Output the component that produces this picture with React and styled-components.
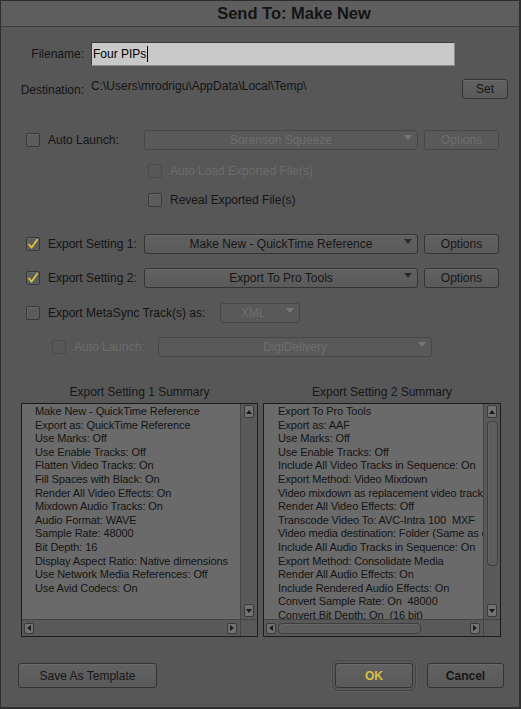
import React from 'react'
import styled, { createGlobalStyle, css } from 'styled-components'

const GlobalStyle = createGlobalStyle`
  html, body {
    margin: 0;
    padding: 0;
    background: #575757;
  }
  body {
    font-family: "Liberation Sans", Arial, sans-serif;
    font-size: 12px;
    color: #111;
  }
`

const Window = styled.div`
  width: 521px;
  height: 709px;
  box-sizing: border-box;
  background: #575757;
  border: 1px solid #2f2f2f;
  border-right-width: 2px;
  border-bottom-width: 2px;
  display: flex;
  flex-direction: column;
  overflow: hidden;
`

const TitleBar = styled.div`
  height: 25px;
  flex-shrink: 0;
  background: #5e5e5e;
  border-bottom: 1px solid #3d3d3d;
  display: flex;
  align-items: center;
  justify-content: center;
  padding-left: 68px;
  font-size: 16.5px;
  font-weight: bold;
  color: #141414;
`

const Body = styled.div`
  display: flex;
  flex-direction: column;
`

const Row = styled.div`
  display: flex;
  align-items: center;
  height: ${p => p.$height || 20}px;
  margin-top: ${p => p.$top}px;
  padding-left: ${p => p.$indent || 0}px;
`

const FieldLabel = styled.div`
  width: 83px;
  text-align: right;
  margin-right: 7px;
  color: #141414;
  padding-top: ${p => p.$drop || 0}px;
`

const TextInput = styled.div`
  width: 364px;
  height: 24px;
  box-sizing: border-box;
  background: #c9c9c9;
  border: 1px solid #3a3a3a;
  border-right-color: #8a8a8a;
  border-bottom-color: #8a8a8a;
  display: flex;
  align-items: center;
  padding-left: 1px;
  color: #000;
`

const Caret = styled.span`
  display: inline-block;
  width: 1px;
  height: 16px;
  background: #000;
  margin-left: 1px;
`

const PathText = styled.div`
  flex: 1;
  margin-top: -7px;
  color: #141414;
`

const buttonBase = css`
  box-sizing: border-box;
  height: ${p => p.$h || 20}px;
  width: ${p => p.$w}px;
  border: 1px solid #343434;
  border-radius: 3px;
  background: linear-gradient(#616161, #5a5a5a);
  box-shadow: inset 0 1px 0 #6a6a6a;
  display: flex;
  align-items: center;
  justify-content: center;
  font-family: "Liberation Sans", Arial, sans-serif;
  font-size: 12px;
  flex-shrink: 0;
`

const Button = styled.div`
  ${buttonBase}
  color: ${p => (p.$disabled ? '#6e6e6e' : '#161616')};
  margin-left: ${p => p.$ml || 0}px;
  margin-right: ${p => p.$mr || 0}px;
  font-weight: ${p => (p.$bold ? 'bold' : 'normal')};
  ${p => p.$disabled && css`
    border-color: #474747;
    box-shadow: none;
    background: #595959;
  `}
`

const DefaultButton = styled(Button)`
  color: #d6c148;
  box-shadow: inset 0 1px 0 #6a6a6a, 0 0 0 2px #595959, 0 0 0 3px #444, 0 0 0 4px #606060;
`

const Check = styled.div`
  width: 14px;
  height: 14px;
  box-sizing: border-box;
  border: 1px solid ${p => (p.$disabled ? '#4b4b4b' : '#383838')};
  border-radius: 2px;
  background: ${p => (p.$disabled ? '#575757' : '#5c5c5c')};
  box-shadow: ${p => (p.$disabled ? 'none' : 'inset 1px 1px 0 #666')};
  flex-shrink: 0;
  display: flex;
  align-items: center;
  justify-content: center;
`

const Label = styled.div`
  margin-left: 8px;
  width: ${p => (p.$w ? `${p.$w}px` : 'auto')};
  color: ${p => (p.$disabled ? '#6c6c6c' : '#141414')};
  white-space: nowrap;
  flex-shrink: 0;
`

const Select = styled.div`
  ${buttonBase}
  position: relative;
  color: ${p => (p.$disabled ? '#6e6e6e' : '#161616')};
  padding-right: ${p => (p.$small ? 14 : 0)}px;
  ${p => p.$disabled && css`
    border-color: #474747;
    box-shadow: none;
    background: #595959;
  `}
`

const Arrow = styled.span`
  position: absolute;
  right: 5px;
  top: 4px;
  width: 0;
  height: 0;
  border-left: 4px solid transparent;
  border-right: 4px solid transparent;
  border-top: 5px solid ${p => (p.$disabled ? '#777' : '#2a2a2a')};
`

const SummaryGrid = styled.div`
  display: grid;
  grid-template-columns: 237px 238px;
  column-gap: 5px;
  padding-left: 20px;
  margin-top: 27px;
`

const SummaryTitle = styled.div`
  text-align: center;
  height: 19px;
  line-height: 17px;
  color: #161616;
`

const Panel = styled.div`
  height: 234px;
  box-sizing: border-box;
  border: 1px solid #1c1c1c;
  display: grid;
  grid-template-columns: 1fr 17px;
  grid-template-rows: 1fr 17px;
`

const List = styled.div`
  background: #6a6a6a;
  overflow: hidden;
  padding: 1px 0 0 ${p => p.$pad}px;
  font-size: 11px;
  line-height: 13.6px;
  letter-spacing: -0.1px;
  color: #141414;
  white-space: pre;
`

const VTrack = styled.div`
  background: #595959;
  border-left: 1px solid #444;
  display: flex;
  flex-direction: column;
  align-items: center;
  padding: 1px 0 2px;
`

const HTrack = styled.div`
  background: #595959;
  border-top: 1px solid #444;
  display: flex;
  align-items: center;
  padding: 0 3px 0 2px;
`

const Corner = styled.div`
  background: #595959;
  border-top: 1px solid #444;
  border-left: 1px solid #444;
`

const ArrowButton = styled.div`
  width: 10px;
  height: ${p => (p.$horiz ? 11 : 13)}px;
  box-sizing: border-box;
  border: 1px solid #3a3a3a;
  border-radius: 2px;
  background: #727272;
  display: flex;
  align-items: center;
  justify-content: center;
  flex-shrink: 0;
`

const TriUp = styled.span`
  width: 0;
  height: 0;
  border-left: 3px solid transparent;
  border-right: 3px solid transparent;
  border-${p => (p.$dir === 'up' ? 'bottom' : 'top')}: 4px solid #1c1c1c;
`

const TriSide = styled.span`
  width: 0;
  height: 0;
  border-top: 3px solid transparent;
  border-bottom: 3px solid transparent;
  border-${p => (p.$dir === 'left' ? 'right' : 'left')}: 4px solid #1c1c1c;
`

const VThumb = styled.div`
  width: 11px;
  margin-top: 3px;
  height: 145px;
  box-sizing: border-box;
  border: 1px solid #3e3e3e;
  border-radius: 4px;
  background: #5d5d5d;
  box-shadow: inset 1px 1px 0 #666;
`

const HThumb = styled.div`
  height: 11px;
  width: 143px;
  margin-left: 2px;
  box-sizing: border-box;
  border: 1px solid #3e3e3e;
  border-radius: 4px;
  background: #5d5d5d;
  box-shadow: inset 1px 1px 0 #666;
`

const Spacer = styled.div`
  flex: 1;
`

const Footer = styled.div`
  display: flex;
  align-items: center;
  margin-top: 26px;
  padding: 0 15px 0 17px;
`

const CheckMark = () => (
  <svg width="12" height="12" viewBox="0 0 12 12">
    <path d="M2 6.5 L4.6 9.6 L10.2 1.8" fill="none" stroke="#dcc640" strokeWidth="1.8" strokeLinecap="round" strokeLinejoin="round" />
  </svg>
)

const Checkbox = ({ checked, disabled }) => (
  <Check $disabled={disabled}>{checked && <CheckMark />}</Check>
)

const Dropdown = ({ value, width, disabled, small }) => (
  <Select $w={width} $disabled={disabled} $small={small}>
    {value}
    <Arrow $disabled={disabled} />
  </Select>
)

const SummaryPanel = ({ lines, pad, thumb }) => (
  <Panel>
    <List $pad={pad}>
      {lines.map((line, i) => (
        <div key={i}>{line}</div>
      ))}
    </List>
    <VTrack>
      <ArrowButton><TriUp $dir="up" /></ArrowButton>
      {thumb && <VThumb />}
      <Spacer />
      <ArrowButton><TriUp $dir="down" /></ArrowButton>
    </VTrack>
    <HTrack>
      <ArrowButton $horiz><TriSide $dir="left" /></ArrowButton>
      {thumb && <HThumb />}
      <Spacer />
      <ArrowButton $horiz><TriSide $dir="right" /></ArrowButton>
    </HTrack>
    <Corner />
  </Panel>
)

const summary1 = [
  'Make New - QuickTime Reference',
  'Export as: QuickTime Reference',
  'Use Marks: Off',
  'Use Enable Tracks: Off',
  'Flatten Video Tracks: On',
  'Fill Spaces with Black: On',
  'Render All Video Effects: On',
  'Mixdown Audio Tracks: On',
  'Audio Format: WAVE',
  'Sample Rate: 48000',
  'Bit Depth: 16',
  'Display Aspect Ratio: Native dimensions',
  'Use Network Media References: Off',
  'Use Avid Codecs: On',
]

const summary2 = [
  'Export To Pro Tools',
  'Export as: AAF',
  'Use Marks: Off',
  'Use Enable Tracks: Off',
  'Include All Video Tracks in Sequence: On',
  'Export Method: Video Mixdown',
  'Video mixdown as replacement video track',
  'Render All Video Effects: Off',
  'Transcode Video To: AVC-Intra 100  MXF',
  'Video media destination: Folder (Same as export)',
  'Include All Audio Tracks in Sequence: On',
  'Export Method: Consolidate Media',
  'Render All Audio Effects: On',
  'Include Rendered Audio Effects: On',
  'Convert Sample Rate: On  48000',
  'Convert Bit Depth: On  (16 bit)',
]

const App = () => {
  return (
    <>
      <GlobalStyle />
      <Window>
        <TitleBar>Send To: Make New</TitleBar>
        <Body>
          <Row $top={15} $height={24}>
            <FieldLabel>Filename:</FieldLabel>
            <TextInput>Four PIPs<Caret /></TextInput>
          </Row>

          <Row $top={13}>
            <FieldLabel $drop={2}>Destination:</FieldLabel>
            <PathText>C:\Users\mrodrigu\AppData\Local\Temp\</PathText>
            <Button $w={46} $mr={11}>Set</Button>
          </Row>

          <Row $top={31} $indent={25}>
            <Checkbox />
            <Label $w={96}>Auto Launch:</Label>
            <Dropdown value="Sorenson Squeeze" width={274} disabled />
            <Button $w={75} $ml={6} $disabled>Options</Button>
          </Row>

          <Row $top={14} $height={14} $indent={147}>
            <Checkbox disabled />
            <Label $disabled>Auto Load Exported File(s)</Label>
          </Row>

          <Row $top={15} $height={14} $indent={147}>
            <Checkbox />
            <Label>Reveal Exported File(s)</Label>
          </Row>

          <Row $top={27} $indent={25}>
            <Checkbox checked />
            <Label $w={96}>Export Setting 1:</Label>
            <Dropdown value="Make New - QuickTime Reference" width={274} />
            <Button $w={75} $ml={6}>Options</Button>
          </Row>

          <Row $top={14} $indent={25}>
            <Checkbox checked />
            <Label $w={96}>Export Setting 2:</Label>
            <Dropdown value="Export To Pro Tools" width={274} />
            <Button $w={75} $ml={6}>Options</Button>
          </Row>

          <Row $top={15} $indent={25}>
            <Checkbox />
            <Label $w={172}>Export MetaSync Track(s) as:</Label>
            <Dropdown value="XML" width={80} disabled small />
          </Row>

          <Row $top={14} $indent={51}>
            <Checkbox disabled />
            <Label $w={84} $disabled>Auto Launch:</Label>
            <Dropdown value="DigiDelivery" width={274} disabled />
          </Row>

          <SummaryGrid>
            <div>
              <SummaryTitle>Export Setting 1 Summary</SummaryTitle>
              <SummaryPanel lines={summary1} pad={13} />
            </div>
            <div>
              <SummaryTitle>Export Setting 2 Summary</SummaryTitle>
              <SummaryPanel lines={summary2} pad={14} thumb />
            </div>
          </SummaryGrid>

          <Footer>
            <Button $w={139} $h={25}>Save As Template</Button>
            <Spacer />
            <DefaultButton $w={78} $h={25} $bold>OK</DefaultButton>
            <Button $w={77} $h={25} $ml={14} $bold>Cancel</Button>
          </Footer>
        </Body>
      </Window>
    </>
  )
}

export default App
